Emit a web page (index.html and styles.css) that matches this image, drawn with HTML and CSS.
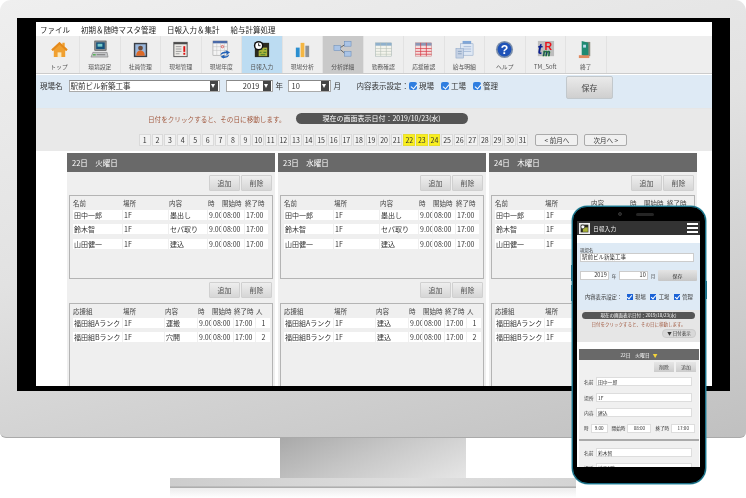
FILE: index.html
```html
<!DOCTYPE html>
<html lang="ja">
<head>
<meta charset="utf-8">
<title>日報入力</title>
<link rel="stylesheet" href="styles.css">
</head>
<body>
<div class="stage">
  <div class="bezel">
    <div class="blackscreen">
      <div class="app">
        <nav class="menu"><span>ファイル</span><span>初期＆随時マスタ管理</span><span>日報入力＆集計</span><span>給与計算処理</span></nav>
        <div class="toolbar">
          <div class="tool"><svg viewBox="0 0 20 20"><path d="M10 2 1.5 10l1.5 1.5 1-1V18h12v-7.5l1 1 1.500-1.500-3-3V3h-2.500v2z" fill="#f0a030"/><path d="M8 18v-5h4v5z" fill="#fbe7b8"/><path d="M10 2 1.500 10l1.500 1.500L10 5l7 6.500 1.500-1.500z" fill="#e58a1c"/></svg><span>トップ</span></div>
          <div class="tool"><svg viewBox="0 0 20 20"><rect x="5" y="1" width="12" height="10" fill="#8a8d90" stroke="#444" stroke-width=".6"/><rect x="6.500" y="2.500" width="9" height="7" fill="#15527c"/><rect x="8" y="4" width="5" height="3" fill="#7cc"/><path d="M1 18l2-5h15l1 5z" fill="#c4c6c8" stroke="#666" stroke-width=".5"/><rect x="3" y="15" width="3" height="1.200" fill="#3a3"/><rect x="7" y="15" width="9" height="1" fill="#777"/></svg><span>環境設定</span></div>
          <div class="tool"><svg viewBox="0 0 20 20"><rect x="3" y="3" width="14" height="15" fill="#3b3f46"/><rect x="4.500" y="4.500" width="11" height="12" fill="#9ab7dc"/><circle cx="10" cy="8.500" r="2.500" fill="#6b4a3a"/><path d="M5.500 16.500c0-4 2-5.500 4.500-5.500s4.500 1.500 4.500 5.500z" fill="#dd6a28"/></svg><span>社員管理</span></div>
          <div class="tool"><svg viewBox="0 0 20 20"><rect x="3" y="2.500" width="14" height="15" fill="#eceae6" stroke="#555"/><rect x="3" y="2.500" width="14" height="2" fill="#4a4a4a"/><path d="M5 7h6M5 9.500h6M5 12h6M5 14.500h4" stroke="#999"/><rect x="13" y="6.500" width="2" height="6" fill="#d11"/><rect x="13" y="13.500" width="2" height="2" fill="#d11"/></svg><span>現場管理</span></div>
          <div class="tool"><svg viewBox="0 0 20 20"><rect x="1" y="1" width="15" height="15" fill="#f4f4f4" stroke="#888" stroke-width=".5"/><rect x="1" y="1" width="15" height="2.500" fill="#4a6aa8"/><path d="M1 7h15M1 11h15M5 3v13M9 3v13M13 3v13" stroke="#bbb" stroke-width=".5"/><circle cx="11" cy="7" r="1.300" fill="none" stroke="#d33" stroke-width=".7"/><path d="M9 16c0-3 3-4 6-4l-1-1.500 5 2.500-4 3 .5-2c-2 0-4 0-6.500 2zM18 15c0 3-3 4-6 4l1 1-4-2.500 4-2v1.500c2 .5 3 0 5-2z" fill="#2462b6"/></svg><span>現場年度</span></div>
          <div class="tool active"><svg viewBox="0 0 20 20"><rect x="3" y="3" width="15" height="15" fill="#2b2b20"/><path d="M7 8h9v9H7z" fill="#a9b23a"/><path d="M8 10h3M13 10h2M8 13h2M12 13h3M9 15.500h5" stroke="#3d7a30"/><circle cx="7" cy="6" r="5" fill="#111"/><circle cx="7" cy="6" r="3.500" fill="#fff"/><path d="M7 3.500V6h2" stroke="#111" fill="none"/></svg><span>日報入力</span></div>
          <div class="tool"><svg viewBox="0 0 20 20"><rect x="3" y="8" width="4" height="10" fill="#2b8fd0"/><rect x="8" y="3" width="4" height="15" fill="#f4b642"/><rect x="13" y="6" width="4" height="12" fill="#8d9298"/></svg><span>現場分析</span></div>
          <div class="tool dark"><svg viewBox="0 0 20 20"><path d="M7 8.500 13 4.500M7 9.500l6 5" stroke="#444" stroke-width=".8"/><rect x="1" y="6" width="7" height="5" fill="#aac4e6" stroke="#5f86b8" stroke-width=".5"/><rect x="12" y="1.500" width="7" height="5" fill="#aac4e6" stroke="#5f86b8" stroke-width=".5"/><rect x="12" y="12" width="7" height="5" fill="#aac4e6" stroke="#5f86b8" stroke-width=".5"/></svg><span>分析詳細</span></div>
          <div class="tool"><svg viewBox="0 0 20 20"><rect x="1.500" y="3" width="17" height="14" fill="#f4f4ec" stroke="#9aa" stroke-width=".5"/><rect x="1.500" y="3" width="17" height="3" fill="#8fb0cc"/><path d="M1.500 9h17M1.500 12h17M1.500 15h17M7 3v14M13 3v14" stroke="#b4c0b4" stroke-width=".6"/></svg><span>勤務確認</span></div>
          <div class="tool"><svg viewBox="0 0 20 20"><rect x="1.500" y="3" width="17" height="14" fill="#f6dcdc" stroke="#b77" stroke-width=".5"/><rect x="1.500" y="3" width="17" height="3" fill="#8a97b6"/><path d="M1.500 9h17M1.500 12h17M1.500 15h17M7 3v14M13 3v14" stroke="#d8404a" stroke-width=".8"/></svg><span>応援確認</span></div>
          <div class="tool"><svg viewBox="0 0 20 20"><rect x="8" y="1" width="9" height="5" fill="#7fa6d8"/><rect x="6" y="4" width="13" height="12" fill="#dfe8f4" stroke="#7f9cc2" stroke-width=".5"/><path d="M9 7h8M9 9.500h8M9 12h8" stroke="#8fa8cc" stroke-width=".7"/><rect x="1" y="9" width="8" height="10" fill="#c6d2e4" stroke="#7f9cc2" stroke-width=".5"/><path d="M3 12h4M3 14.500h4" stroke="#6f8cb2" stroke-width=".7"/></svg><span>給与明細</span></div>
          <div class="tool"><svg viewBox="0 0 20 20"><circle cx="10" cy="10" r="9" fill="#7b8ea8"/><circle cx="10" cy="10" r="7.300" fill="#1e52b8"/><text x="10" y="14.300" class="qmark">?</text></svg><span>ヘルプ</span></div>
          <div class="tool"><svg viewBox="0 0 20 20"><rect x="2" y="1" width="17" height="16" fill="#bdbdbd"/><text x="1.500" y="15" class="tm-t">t</text><text x="9" y="11" class="tm-r">R</text><text x="7" y="16.500" class="tm-m">m</text></svg><span>TM_Soft</span></div>
          <div class="tool"><svg viewBox="0 0 20 20"><path d="M7 2h8v15H7z" fill="#8a8a7a"/><path d="M6 1l7 2v15l-7-2z" fill="#1f8a72"/><rect x="7.500" y="5" width="3" height="3" fill="#bde"/><path d="M3 16h11v3H3z" fill="#e08a60"/></svg><span>終了</span></div>
        </div>
        <form class="filter">
          <span class="flabel">現場名</span>
          <div class="sel sel-site"><span>駅前ビル新築工事</span><i class="arrow"></i></div>
          <div class="sel sel-year"><span>2019</span><i class="arrow"></i></div><span class="unit">年</span>
          <div class="sel sel-month"><span>10</span><i class="arrow"></i></div><span class="unit">月</span>
          <span class="flabel lab-show">内容表示設定：</span>
          <i class="chk"></i><span class="flabel">現場</span>
          <i class="chk chk-g"></i><span class="flabel">工場</span>
          <i class="chk chk-g"></i><span class="flabel">管理</span>
          <div class="save">保存</div>
        </form>
        <div class="datebar">
          <div class="inforow"><span class="hint">日付をクリックすると、その日に移動します。</span><span class="pill">現在の画面表示日付：2019/10/23(水)</span></div>
          <div class="days">
            <b>1</b><b>2</b><b>3</b><b>4</b><b>5</b><b>6</b><b>7</b><b>8</b><b>9</b><b>10</b><b>11</b><b>12</b><b>13</b><b>14</b><b>15</b><b>16</b><b>17</b><b>18</b><b>19</b><b>20</b><b>21</b><b class="hl">22</b><b class="hl">23</b><b class="hl">24</b><b>25</b><b>26</b><b>27</b><b>28</b><b>29</b><b>30</b><b>31</b>
            <em class="mbtn first">&lt; 前月へ</em><em class="mbtn">次月へ &gt;</em>
          </div>
        </div>
        <div class="cols">
          <section class="col">
            <h3>22日　火曜日</h3>
            <div class="acts"><u>追加</u><u>削除</u></div>
            <div class="box">
              <div class="r a h"><span>名前</span><span>場所</span><span>内容</span><span>時</span><span>開始時</span><span>終了時</span></div>
              <div class="r a"><s>田中一郎</s><s>1F</s><s>墨出し</s><s>9.00</s><s>08:00</s><s>17:00</s></div>
              <div class="r a"><s>鈴木智</s><s>1F</s><s>セパ取り</s><s>9.00</s><s>08:00</s><s>17:00</s></div>
              <div class="r a"><s>山田健一</s><s>1F</s><s>建込</s><s>9.00</s><s>08:00</s><s>17:00</s></div>
            </div>
            <div class="acts"><u>追加</u><u>削除</u></div>
            <div class="box">
              <div class="r b h"><span>応援組</span><span>場所</span><span>内容</span><span>時</span><span>開始時</span><span>終了時</span><span>人</span></div>
              <div class="r b"><s>福田組Aランク</s><s>1F</s><s>運搬</s><s>9.00</s><s>08:00</s><s>17:00</s><s class="n">1</s></div>
              <div class="r b"><s>福田組Bランク</s><s>1F</s><s>穴開</s><s>9.00</s><s>08:00</s><s>17:00</s><s class="n">2</s></div>
            </div>
          </section>
          <section class="col">
            <h3>23日　水曜日</h3>
            <div class="acts"><u>追加</u><u>削除</u></div>
            <div class="box">
              <div class="r a h"><span>名前</span><span>場所</span><span>内容</span><span>時</span><span>開始時</span><span>終了時</span></div>
              <div class="r a"><s>田中一郎</s><s>1F</s><s>墨出し</s><s>9.00</s><s>08:00</s><s>17:00</s></div>
              <div class="r a"><s>鈴木智</s><s>1F</s><s>セパ取り</s><s>9.00</s><s>08:00</s><s>17:00</s></div>
              <div class="r a"><s>山田健一</s><s>1F</s><s>建込</s><s>9.00</s><s>08:00</s><s>17:00</s></div>
            </div>
            <div class="acts"><u>追加</u><u>削除</u></div>
            <div class="box">
              <div class="r b h"><span>応援組</span><span>場所</span><span>内容</span><span>時</span><span>開始時</span><span>終了時</span><span>人</span></div>
              <div class="r b"><s>福田組Aランク</s><s>1F</s><s>建込</s><s>9.00</s><s>08:00</s><s>17:00</s><s class="n">1</s></div>
              <div class="r b"><s>福田組Bランク</s><s>1F</s><s>建込</s><s>9.00</s><s>08:00</s><s>17:00</s><s class="n">2</s></div>
            </div>
          </section>
          <section class="col">
            <h3>24日　木曜日</h3>
            <div class="acts"><u>追加</u><u>削除</u></div>
            <div class="box">
              <div class="r a h"><span>名前</span><span>場所</span><span>内容</span><span>時</span><span>開始時</span><span>終了時</span></div>
              <div class="r a"><s>田中一郎</s><s>1F</s><s>墨出し</s><s>9.00</s><s>08:00</s><s>17:00</s></div>
              <div class="r a"><s>鈴木智</s><s>1F</s><s>セパ取り</s><s>9.00</s><s>08:00</s><s>17:00</s></div>
              <div class="r a"><s>山田健一</s><s>1F</s><s>建込</s><s>9.00</s><s>08:00</s><s>17:00</s></div>
            </div>
            <div class="acts"><u>追加</u><u>削除</u></div>
            <div class="box">
              <div class="r b h"><span>応援組</span><span>場所</span><span>内容</span><span>時</span><span>開始時</span><span>終了時</span><span>人</span></div>
              <div class="r b"><s>福田組Aランク</s><s>1F</s><s>建込</s><s>9.00</s><s>08:00</s><s>17:00</s><s class="n">1</s></div>
              <div class="r b"><s>福田組Bランク</s><s>1F</s><s>建込</s><s>9.00</s><s>08:00</s><s>17:00</s><s class="n">2</s></div>
            </div>
          </section>
        </div>
      </div>
    </div>
  </div>
  <div class="neck"></div>
  <div class="foot"></div>
  <div class="footshadow"></div>

  <div class="phone">
    <i class="side s1"></i><i class="side s2"></i><i class="side s3"></i>
    <div class="ptop"><i class="cam"></i><i class="speaker"></i></div>
    <div class="pscreen">
      <header class="phead">
        <svg viewBox="0 0 20 20"><rect width="20" height="20" fill="#eee"/><rect x="3" y="3" width="14" height="14" fill="#2b2b20"/><path d="M7 8h9v8H7z" fill="#a9b23a"/><circle cx="7" cy="7" r="3.500" fill="#fff" stroke="#111"/></svg>
        <span class="ptitle">日報入力</span><span class="burger"><i></i><i></i><i></i></span>
      </header>
      <div class="pform">
        <div class="plabel">現場名</div>
        <div class="pinput wide">駅前ビル新築工事</div>
        <div class="prow">
          <div class="pinput py">2019</div><span class="pu">年</span>
          <div class="pinput py">10</div><span class="pu">月</span>
          <div class="psave">保存</div>
        </div>
        <div class="pchecks"><span>内容表示設定：</span><i class="pchk"></i><span>現場</span><i class="pchk"></i><span>工場</span><i class="pchk"></i><span>管理</span></div>
      </div>
      <div class="pdate">
        <div class="ppill">現在の画面表示日付：2019/10/23(水)</div>
        <div class="phint">日付をクリックすると、その日に移動します。</div>
        <div class="pshow">▼ 日付表示</div>
      </div>
      <div class="pday">
        <div class="pdh">22日　火曜日 <em>▼</em></div>
        <div class="pacts"><u>削除</u><u>追加</u></div>
        <div class="pf"><span>名前</span><div>田中一郎</div></div>
        <div class="pf"><span>場所</span><div>1F</div></div>
        <div class="pf"><span>内容</span><div>建込</div></div>
        <div class="pt"><span>時</span><div class="t1">9.00</div><span>開始時</span><div class="t2">08:00</div><span>終了時</span><div class="t2">17:00</div></div>
        <hr class="psep">
        <div class="pf"><span>名前</span><div>鈴木智</div></div>
        <div class="pf"><span>場所</span><div>地下1階</div></div>
      </div>
    </div>
  </div>
</div>
</body>
</html>
```
FILE: styles.css
```css
* { box-sizing: border-box; }
html, body { margin: 0; padding: 0; background: #fff; }
body { font-family: "Noto Sans CJK JP", "Noto Sans", sans-serif; color: #333; width: 746px; height: 498px; overflow: hidden; }
i, em, s, u, b { font-style: normal; text-decoration: none; font-weight: normal; }
.stage { position: relative; width: 746px; height: 498px; }

/* monitor */
.bezel { height: 438px; padding: 18px 16px 46px 17px; border-radius: 11px 11px 6px 6px; background: linear-gradient(165deg, #efefef 0%, #e2e2e2 45%, #c0c0c0 100%); border-bottom: 1px solid #aaa; }
.blackscreen { height: 373px; background: #000; padding: 4px 18px 5px 19px; }
.app { height: 364px; background: #fff; overflow: hidden; filter: blur(.35px); }
.neck { width: 186px; height: 40px; margin: 0 auto; background: linear-gradient(155deg, #a9a9a9 0%, #c6c6c6 45%, #e6e6e6 100%); }
.foot { width: 406px; height: 10px; margin: 0 auto; background: linear-gradient(transparent 80%, #a8a8a8 90%, #b4b4b4 100%), linear-gradient(90deg, #cdcdcd, #dedede 60%, #d4d4d4); }
.footshadow { width: 406px; height: 10px; margin: 0 auto; background: linear-gradient(#ececec, #fff); }

/* menu & toolbar */
.menu { display: flex; height: 14px; gap: 11px; padding-left: 4px; align-items: center; font-size: 7.500px; color: #222; background: #fff; }
.toolbar { display: flex; height: 38px; background: #eeeeee; border-bottom: 1px solid #ccc; padding-right: 104px; }
.tool { width: 40.500px; flex: none; display: flex; flex-direction: column; align-items: center; border-right: 1px solid #e2e2e2; font-size: 5.800px; color: #555; }
.tool:first-child { width: 44px; padding-left: 3px; }
.tool svg { width: 19px; height: 19px; margin-top: 4px; flex: none; }
.tool span { margin-top: 3px; line-height: 9px; white-space: nowrap; }
.tool.active { background: #bcdcf2; }
.tool.dark { background: #c9c9c9; }
.qmark { font: bold 13px "Liberation Sans", sans-serif; fill: #fff; text-anchor: middle; }
.tm-t { font: italic bold 15px "Liberation Sans", sans-serif; fill: #0a1f8f; }
.tm-r { font: bold 11px "Liberation Sans", sans-serif; fill: #e8121a; }
.tm-m { font: italic bold 9px "Liberation Sans", sans-serif; fill: #111e8a; stroke: #1a8a1a; stroke-width: .5; }

/* filter */
.filter { height: 35px; background: #deeaf5; border-top: 1px solid #fff; border-bottom: 1px solid #e6e6e6; display: flex; align-items: flex-start; padding: 5px 0 0 4px; font-size: 7.500px; color: #333; }
.flabel { line-height: 12px; white-space: nowrap; }
.sel { height: 12px; background: #fff; border: 1px solid #aaa; border-top-color: #888; display: flex; align-items: center; justify-content: space-between; font-size: 7.500px; line-height: 10px; padding: 0 1px 0 1px; position: relative; }
.sel-site { width: 151px; margin-left: 6px; }
.sel-year { width: 47px; margin-left: 6px; }
.sel-year span { margin-left: auto; margin-right: 3px; }
.sel-month { width: 43px; margin-left: 5px; padding-left: 3px; }
.unit { margin: 0 0 0 3px; line-height: 12px; width: 7px; flex: none; white-space: nowrap; }
.arrow { flex: none; width: 8px; height: 10px; background: #444; position: relative; display: block; }
.arrow::after { content: ""; position: absolute; left: 1.500px; top: 3px; border: 2.500px solid transparent; border-top: 4px solid #fff; border-bottom: 0; }
.lab-show { margin-left: 16px; margin-right: 0; }
.chk { width: 8px; height: 8px; margin: 2px 2px 0 0; border-radius: 2px; background: #2f7ee0; position: relative; flex: none; }
.chk::after, .pchk::after { content: ""; position: absolute; left: 2.500px; top: 1px; width: 3px; height: 5px; border: solid #fff; border-width: 0 1px 1px 0; transform: rotate(40deg); }
.chk-g { margin-left: 7px; }
.save { margin-left: 68px; margin-top: -4px; width: 47px; height: 23px; background: linear-gradient(#eaeaea, #cfcfcf); border: 1px solid #c2c8cc; border-radius: 2px; font-size: 8px; line-height: 21px; text-align: center; color: #444; }

/* date bar */
.datebar { height: 42px; background: #e9e9e9; padding-top: 4px; }
.inforow { height: 11px; display: flex; align-items: center; padding-left: 112px; gap: 10px; font-size: 6.600px; }
.hint { color: #a25a40; white-space: nowrap; }
.pill { width: 172px; height: 11px; border-radius: 6px; background: #555; color: #fff; text-align: center; line-height: 11px; font-size: 7px; }
.days { display: flex; gap: 1px; margin-top: 10px; padding-left: 103px; height: 12px; }
.days b { width: 11.600px; flex: none; border: 1px solid #dadada; font-size: 7px; line-height: 10px; text-align: center; color: #333; background: #f2f2f2; }
.days b.hl { background: #f9ef1e; border-color: #e8de30; }
.mbtn { width: 43px; background: #f0f0f0; border: 1px solid #aaa; border-radius: 2px; font-size: 6.500px; line-height: 10px; text-align: center; margin-left: 5px; flex: none; }
.mbtn.first { margin-left: 6px; }

/* day columns */
.cols { display: flex; gap: 3px; padding: 2px 0 0 31px; height: 240px; overflow: hidden; }
.col { width: 208px; flex: none; background: #efefef; padding: 0 2px; height: 238px; }
.col h3 { margin: 0 -2px; height: 19px; padding-left: 5px; background: #696969; color: #fff; font-size: 7.500px; font-weight: normal; line-height: 19px; }
.acts { display: flex; justify-content: flex-end; gap: 1px; padding: 3px 1px 3px 0; height: 23px; }
.col .box + .acts { height: 24px; }
.acts u { width: 31px; height: 16px; background: linear-gradient(#eeeeee, #d6d6d6); border: 1px solid #d0d0d0; border-radius: 1px; font-size: 7px; line-height: 14px; text-align: center; color: #555; }
.box { height: 84px; background: #efefef; border: 1px solid #b4b4b4; padding: 2px 0 0 3px; display: flex; flex-direction: column; gap: 4.500px; }
.box:last-child { height: 90px; }
.r { display: grid; height: 10px; font-size: 7px; line-height: 10px; column-gap: 1px; }
.a { grid-template-columns: 49px 45px 38px 13px 22px 23px; }
.b { grid-template-columns: 49px 41px 32px 13px 21px 21px 14px; }
.h { height: 11px; margin-bottom: -4px; color: #444; font-size: 6.500px; white-space: nowrap; }
.r s { background: #fff; padding-left: 1px; overflow: hidden; white-space: nowrap; }
.r s.n { text-align: center; }

/* phone */
.phone { position: absolute; left: 572px; top: 206px; width: 134px; height: 278px; background: #000; border-radius: 15px 15px 16px 16px; border: 1px solid #1c7088; box-shadow: 0 0 0 .5px #2a8aa0; padding: 0 5px 16px 4px; display: flex; flex-direction: column; }
.side { position: absolute; width: 2px; background: #1c7088; }
.s1 { left: -2px; top: 58px; height: 16px; }
.s2 { left: -2px; top: 78px; height: 16px; }
.s3 { right: -2px; top: 74px; height: 18px; }
.ptop { height: 14px; flex: none; display: flex; justify-content: center; align-items: center; gap: 14px; padding-right: 6px; }
.cam { width: 4px; height: 4px; border-radius: 50%; background: #222; border: 1px solid #333; }
.speaker { width: 18px; height: 3px; border-radius: 2px; background: #252525; }
.pscreen { flex: 1; min-height: 0; background: #fff; overflow: hidden; font-size: 5px; filter: blur(.3px); }
.phead { height: 14px; background: #333; display: flex; align-items: center; padding: 0 2px; color: #eee; font-size: 5.800px; }
.phead svg { width: 11px; height: 11px; flex: none; }
.ptitle { margin-left: 3px; }
.burger { margin-left: auto; display: flex; flex-direction: column; gap: 2px; }
.burger i { display: block; width: 11px; height: 2px; background: #fff; }
.pform { margin-top: 8px; background: #deeaf5; height: 67px; padding: 4px 3px 0 3px; }
.plabel { font-size: 4.500px; line-height: 6px; color: #444; }
.pinput { height: 9px; background: #fff; border: 1px solid #ccc; font-size: 5.500px; line-height: 7px; padding: 0 1px; }
.wide { width: 114px; }
.prow { display: flex; align-items: center; margin-top: 8px; height: 11px; }
.py { width: 29px; text-align: right; letter-spacing: .03em; }
.pu { width: 10px; text-align: center; font-size: 4.500px; flex: none; }
.psave { width: 39px; height: 11px; background: linear-gradient(#e4e4e4, #c6c6c6); text-align: center; line-height: 11px; font-size: 5px; margin-left: 0; border-radius: 1px; }
.pchecks { display: flex; align-items: center; gap: 2.500px; margin-top: 12px; padding-left: 5px; font-size: 5.300px; }
.pchk { width: 6px; height: 6px; background: #1a62d6; position: relative; flex: none; margin-left: 2px; }
.pchk::after { left: 1.800px; top: 0; width: 2px; height: 4px; }
.pdate { height: 32px; background: #e6e6e6; padding: 1px 4px 0; position: relative; }
.ppill { height: 7px; margin: 1px 0 0 1px; width: 113px; border-radius: 4px; background: #555; color: #fff; text-align: center; line-height: 7px; font-size: 4.500px; }
.phint { color: #a25a40; text-align: center; font-size: 4.500px; line-height: 7px; margin-top: 2px; }
.pshow { width: 34px; height: 9px; margin: 1px 0 0 auto; background: #d8d8d8; border: 1px solid #ccc; border-radius: 4px; font-size: 4.500px; line-height: 7px; text-align: center; color: #333; }
.pday { margin: 7px 1px 0 2px; background: #f0f0f0; }
.pdh { height: 11px; background: #696969; color: #fff; text-align: center; font-size: 4.800px; line-height: 11px; }
.pdh em { color: #f4d43a; margin-left: 2px; }
.pacts { display: flex; justify-content: flex-end; gap: 2px; padding: 2px 3px 5px 0; }
.pacts u { width: 20px; height: 10px; background: linear-gradient(#e6e6e6, #cccccc); font-size: 4.800px; line-height: 10px; text-align: center; color: #444; }
.pf { display: flex; align-items: center; height: 9px; margin: 0 7px 6.500px 5px; font-size: 4.800px; }
.pf span { width: 12px; color: #444; flex: none; }
.pf div { flex: 1; height: 9px; background: #fff; border: 1px solid #ddd; padding-left: 1px; line-height: 7px; }
.pt { display: flex; align-items: center; height: 9px; margin: 0 3px 6px 5px; font-size: 4.600px; gap: 2px; }
.pt div { height: 9px; background: #fff; border: 1px solid #ddd; text-align: center; line-height: 7px; }
.t1 { width: 17px; }
.t2 { width: 24px; }
.pt span { white-space: nowrap; margin-left: 2px; }
.pt span:first-child { margin-left: 0; }
.psep { border: 0; height: 2px; background: #aaa; margin: 0 0 7px; }
```
